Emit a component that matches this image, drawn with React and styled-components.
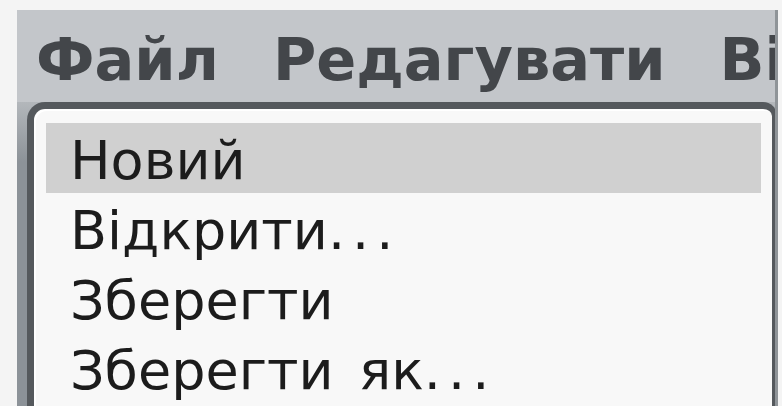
import React from 'react';
import styled, { createGlobalStyle } from 'styled-components';

const GlobalStyle = createGlobalStyle`
  html, body {
    margin: 0;
    padding: 0;
    background: #f4f4f4;
    overflow: hidden;
  }
`;

const Page = styled.div`
  height: 406px;
  padding: 10px 4px 0 17px;
  box-sizing: border-box;
`;

const Window = styled.div`
  height: 100%;
  display: flex;
  flex-direction: column;
  background: #c3c6ca;
  border-right: 3px solid #8f9498;
  overflow: hidden;
`;

const MenuBar = styled.div`
  display: flex;
  gap: 54px;
  height: 92px;
  box-sizing: border-box;
  padding: 8px 0 0 19px;
  font-family: 'DejaVu Sans', Verdana, sans-serif;
  font-weight: bold;
  font-size: 59px;
  line-height: 84px;
  color: #43464a;
  white-space: nowrap;
`;

const MenuTitle = styled.span`
  flex: none;
`;

const Body = styled.div`
  flex: 1;
  display: flex;
  background: linear-gradient(#b3b7bb, #8c9298 60px);
`;

const Gutter = styled.div`
  width: 10px;
  flex: none;
`;

const Dropdown = styled.div`
  flex: 1;
  margin-right: -2px;
  background: #f8f8f8;
  border: solid #55595d;
  border-width: 7px 5px 0 7px;
  border-top-left-radius: 18px;
  border-top-right-radius: 14px;
  box-shadow: inset 2px 2px 0 #ffffff;
  padding: 14px 11px 0 12px;
`;

const Item = styled.div`
  height: 70px;
  box-sizing: border-box;
  padding: 6px 0 0 24px;
  font-family: 'DejaVu Sans', Verdana, sans-serif;
  font-size: 54px;
  line-height: 64px;
  word-spacing: 8px;
  color: #1c1c1c;
  white-space: nowrap;
  background: ${(props) => (props.active ? '#d0d0d0' : 'transparent')};
`;

// pixel-font dots sit further apart than the vector ones
const Dots = styled.span`
  letter-spacing: 7px;
`;

const titles = ['Файл', 'Редагувати', 'Вікно'];
const items = [
  { label: 'Новий' },
  { label: 'Відкрити', more: true },
  { label: 'Зберегти' },
  { label: 'Зберегти як', more: true },
];

export default function App() {
  return (
    <>
      <GlobalStyle />
      <Page>
        <Window>
          <MenuBar>
            {titles.map((title) => (
              <MenuTitle key={title}>{title}</MenuTitle>
            ))}
          </MenuBar>
          <Body>
            <Gutter />
            <Dropdown>
              {items.map((item, index) => (
                <Item key={item.label} active={index === 0}>
                  {item.label}
                  {item.more && <Dots>...</Dots>}
                </Item>
              ))}
            </Dropdown>
          </Body>
        </Window>
      </Page>
    </>
  );
}
